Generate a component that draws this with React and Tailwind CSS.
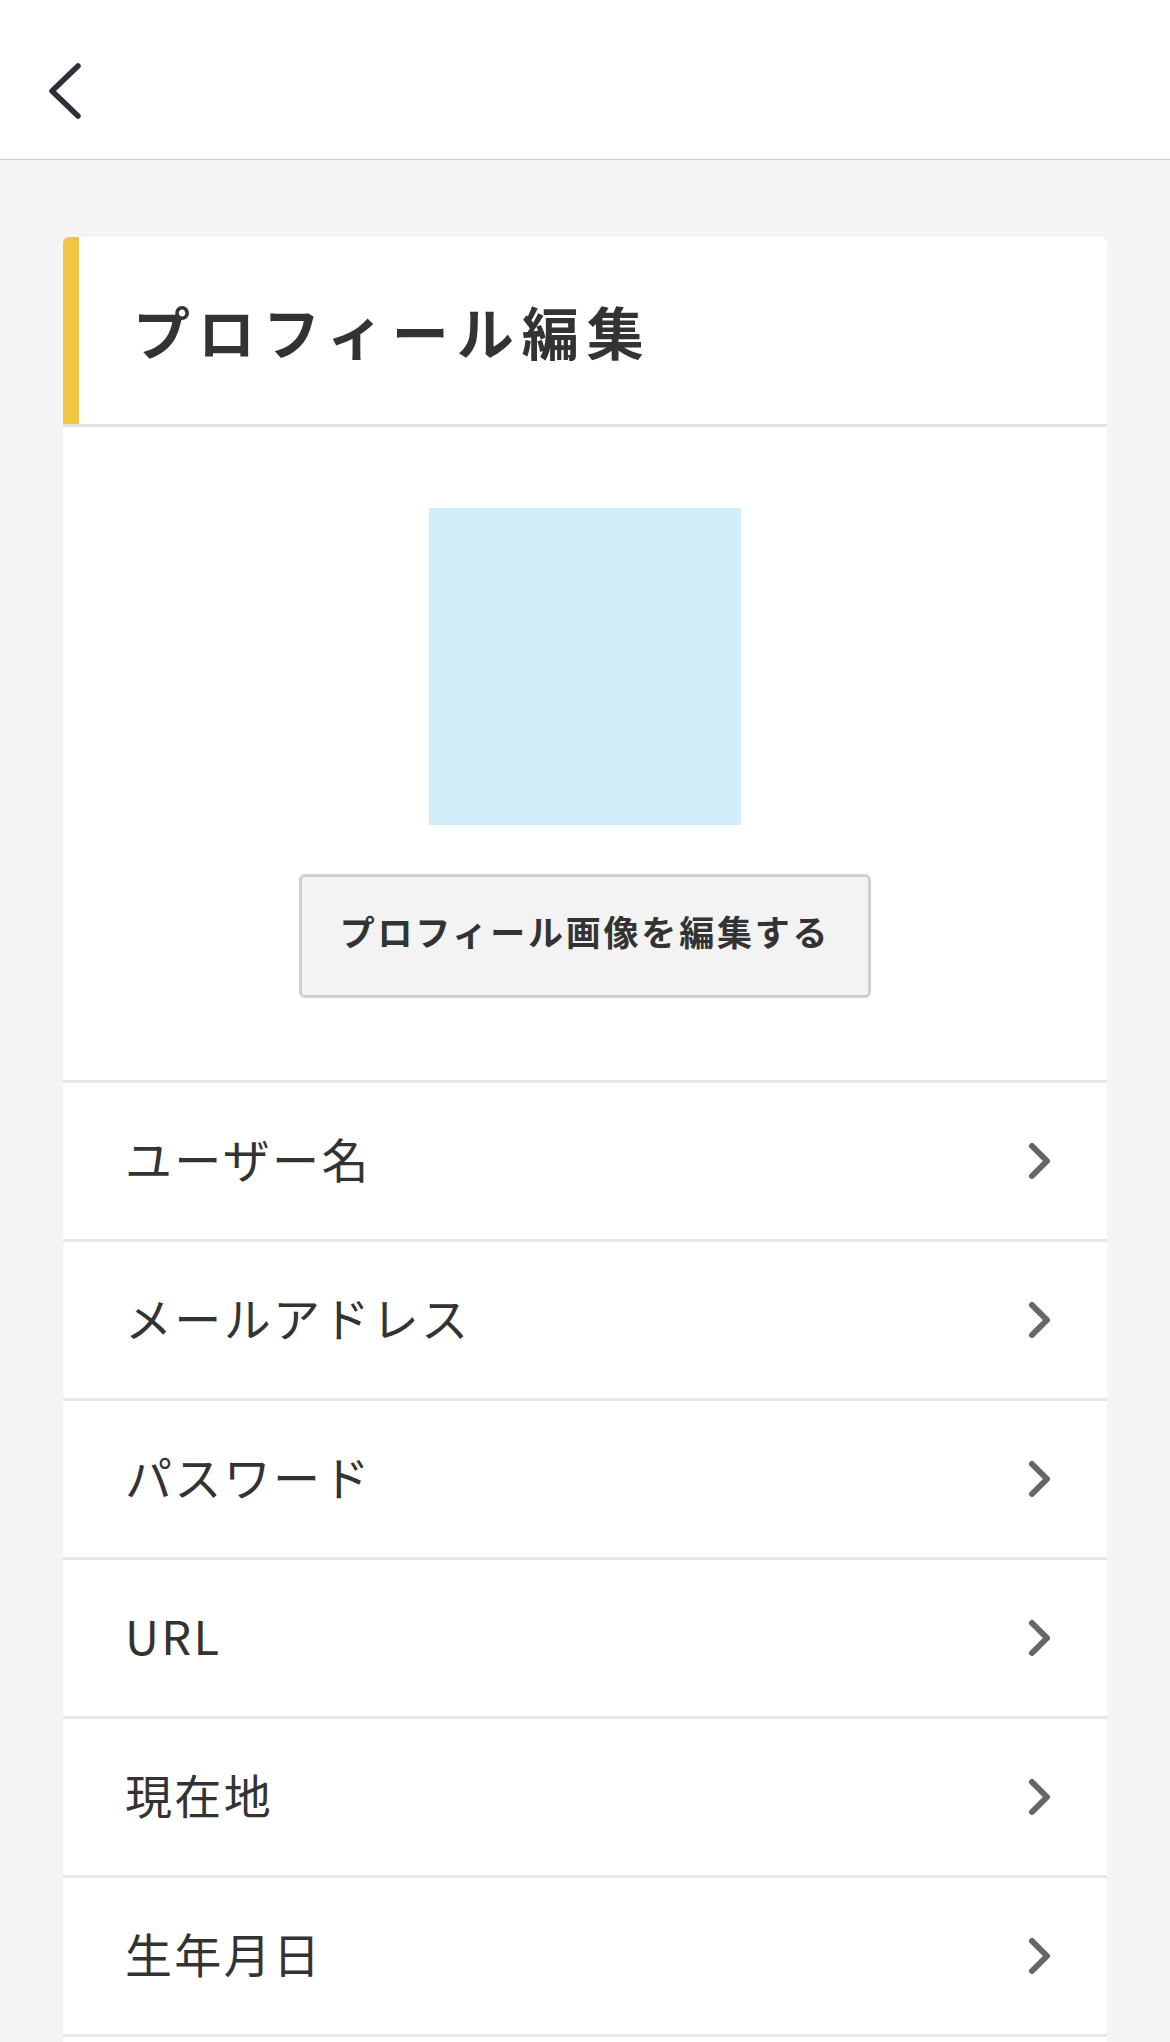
import React from "react";

const rows = ["ユーザー名", "メールアドレス", "パスワード", "URL", "現在地", "生年月日"];

const font = { fontFamily: '"Noto Sans CJK JP", "Noto Sans", sans-serif' };

const Chevron = () => (
  <svg width="26" height="40" viewBox="0 0 26 40" fill="none" className="shrink-0">
    <polyline points="5,5 20,20 5,35" stroke="#666666" strokeWidth="6" strokeLinecap="round" strokeLinejoin="round" />
  </svg>
);

const App = () => {
  return (
    <div className="min-h-screen bg-[#f4f4f4]" style={font}>
      {/* Top bar */}
      <header className="h-[160px] bg-white border-b border-[#cccccc] flex items-start pt-[60px] pl-[44px]">
        <svg width="40" height="62" viewBox="0 0 40 62" fill="none">
          <polyline points="34,6 8,31 34,56" stroke="#2b2f36" strokeWidth="5.5" strokeLinecap="round" strokeLinejoin="round" />
        </svg>
      </header>

      <main className="px-[63px] pt-[77px]">
        <div className="bg-white rounded-t-[6px] overflow-hidden">
          {/* Title */}
          <div className="flex h-[190px] border-b-[3px] border-[#e3e3e3]">
            <div className="w-[16px] bg-[#f1c644]"></div>
            <h1 className="flex items-center pl-[54px] text-[57px] font-bold tracking-[0.14em] text-[#333333]">
              プロフィール編集
            </h1>
          </div>

          {/* Profile image */}
          <div className="flex flex-col items-center pt-[81px] pb-[82px]">
            <div className="w-[312px] h-[317px] bg-[#d3eefb]"></div>
            <button className="mt-[49px] w-[572px] h-[124px] pb-[10px] bg-[#f3f3f3] border-[3px] border-[#d0d0d0] rounded-[6px] text-[35px] font-bold tracking-[0.08em] text-[#333333]">
              プロフィール画像を編集する
            </button>
          </div>

          {/* Settings list */}
          {rows.map((label) => (
            <div
              key={label}
              className="h-[159px] border-t-[3px] border-[#e6e6e6] flex items-center justify-between pl-[62px] pr-[54px]"
            >
              <span className="text-[47px] text-[#333333] tracking-[0.05em] pb-[6px]">{label}</span>
              <Chevron />
            </div>
          ))}
          <div className="h-[40px] border-t-[3px] border-[#e6e6e6]"></div>
        </div>
      </main>
    </div>
  );
};

export default App;
